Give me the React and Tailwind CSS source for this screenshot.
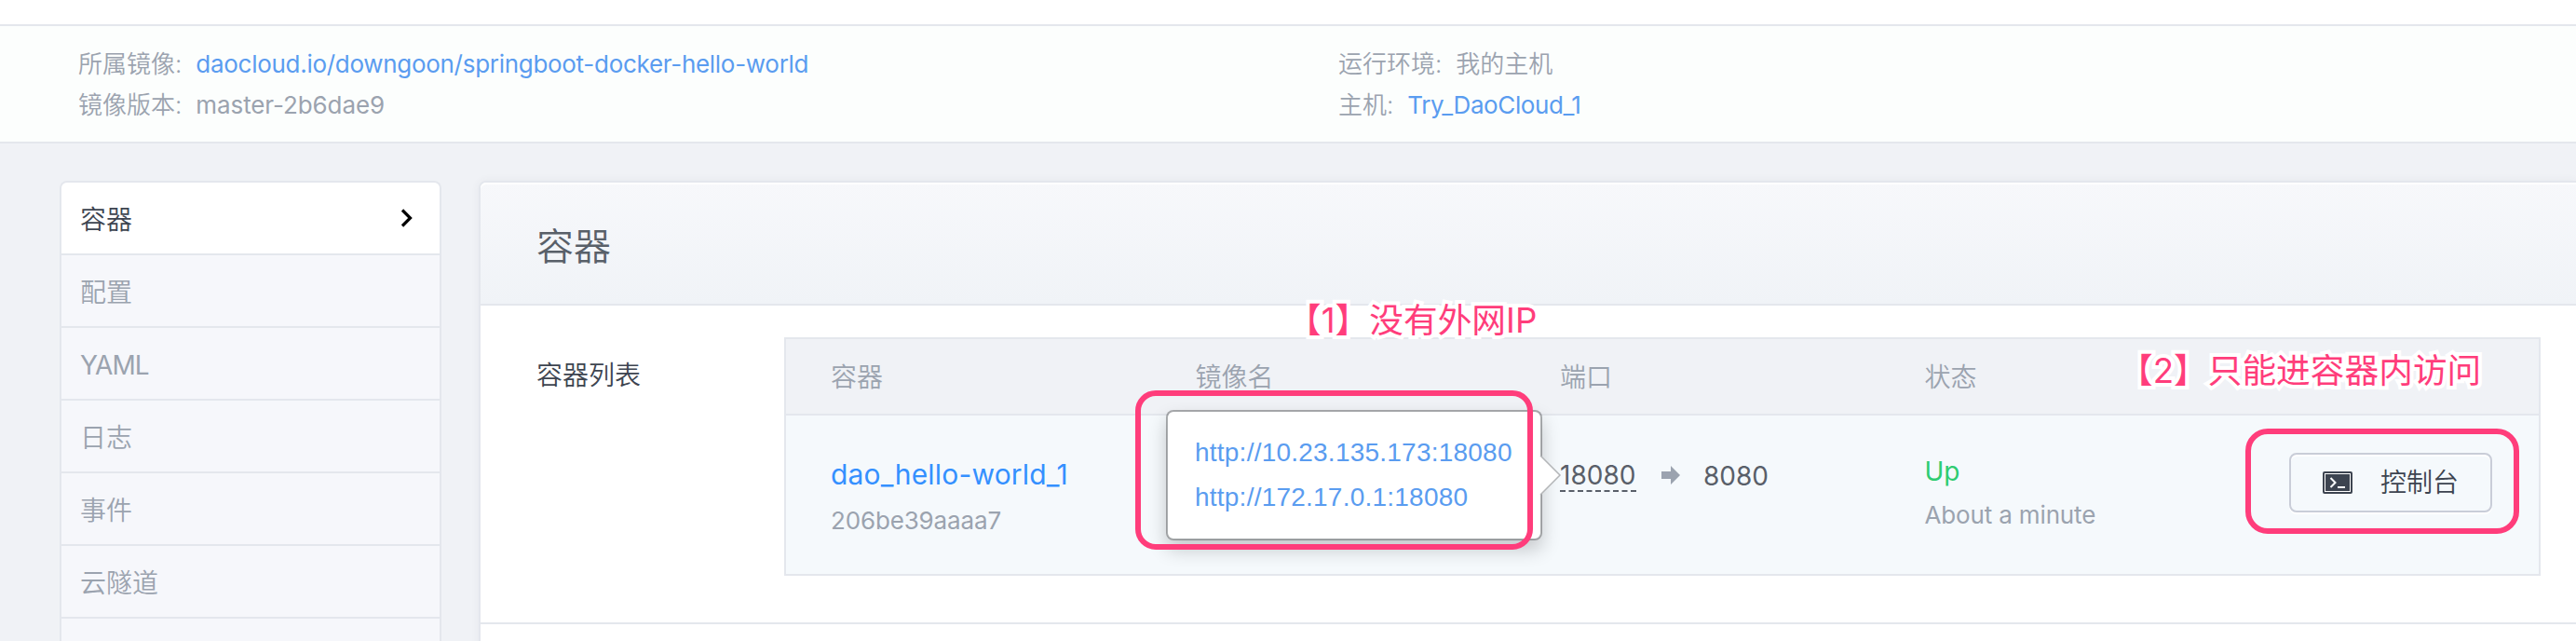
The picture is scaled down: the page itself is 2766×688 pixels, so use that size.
const columns = ["容器", "镜像名", "端口", "状态", ""];
const menu = ["容器", "配置", "YAML", "日志", "事件", "云隧道", ""];

function Annotation({ className, children }) {
  return (
    <div
      className={`absolute z-30 whitespace-pre leading-[44px] text-[36.7px] font-normal text-[#ff3d7b] [-webkit-text-stroke:8px_white] [paint-order:stroke_fill] [stroke-linejoin:round] ${className}`}
    >
      {children}
    </div>
  );
}

function InfoRow({ label, children }) {
  return (
    <div className="flex gap-[15px]">
      <span>{label}:</span>
      {children}
    </div>
  );
}

export default function App() {
  return (
    <div className="relative flex h-[688px] w-[2766px] flex-col overflow-hidden bg-[#f0f2f6] font-['Inter','Noto_Sans_CJK_SC',sans-serif] text-[28px] font-[350] text-[#9ba3af]">
      <div className="h-[28px] shrink-0 border-b-2 border-[#e4e7ed] bg-white" />
      <div className="flex h-[126px] shrink-0 border-b-2 border-[#e4e7ed] bg-[#fcfefd] pl-[84px] pt-[19px] text-[26px] leading-[44px]">
        <div className="w-[1353px]">
          <InfoRow label="所属镜像">
            <a className="font-normal tracking-[-0.29px] text-[#5a9cf0]">daocloud.io/downgoon/springboot-docker-hello-world</a>
          </InfoRow>
          <InfoRow label="镜像版本">
            <span className="font-normal tracking-[-0.1px]">master-2b6dae9</span>
          </InfoRow>
        </div>
        <div>
          <InfoRow label="运行环境">
            <span>我的主机</span>
          </InfoRow>
          <InfoRow label="主机">
            <a className="font-normal tracking-[-0.4px] text-[#5a9cf0]">Try_DaoCloud_1</a>
          </InfoRow>
        </div>
      </div>

      <div className="flex flex-1 items-start pl-[64px] pt-[40px]">
        <nav className="mr-[40px] w-[410px] shrink-0 overflow-hidden rounded-t-[8px] border-x-2 border-t-2 border-[#e4e7ed]">
          {menu.map((item, i) => (
            <div
              key={i}
              className={`flex h-[78px] items-center justify-between border-b-2 border-[#e4e7ed] pl-[20px] pr-[28px] ${i === 0 ? "bg-white text-[#3d4450]" : "bg-[#f6f7fb]"}`}
            >
              <span className={item === "YAML" ? "pt-[4px] font-normal tracking-[-0.9px]" : "pt-[4px]"}>{item}</span>
              {i === 0 && (
                <svg className="h-[20px] w-[14px]" viewBox="0 0 14 20" fill="none" stroke="#000" strokeWidth="3.2">
                  <path d="M2 1.5 L10.5 10 L2 18.5" />
                </svg>
              )}
            </div>
          ))}
        </nav>

        <main className="h-[600px] flex-1 rounded-tl-[8px] border-l-2 border-t-2 border-[#e4e7ed] bg-white shadow-[0_0_10px_rgba(60,70,90,0.06)]">
          <header className="flex h-[132px] items-center rounded-tl-[6px] border-b-2 border-[#e4e7ed] bg-linear-to-b from-[#f7f8fb] to-[#f0f3f7] pl-[60px] pt-[8px] text-[40px] text-[#596069] shadow-[inset_0_2px_0_#fff]">
            容器
          </header>
          <section className="flex h-[342px] border-b-2 border-[#e4e7ed] pl-[60px] pt-[34px]">
            <h3 className="w-[266px] pt-[19px] text-[28px] font-[350] leading-[44px] text-[#3d4450]">容器列表</h3>
            <div className="h-[256px] w-[1886px] border-2 border-[#e4e7ed]">
              <div className="flex h-[82px] items-center border-b-2 border-[#e4e7ed] bg-[#f0f2f6]">
                {columns.map((c, i) => (
                  <div key={i} className="w-[391.5px] shrink-0 pl-[48px] pt-[2px] last:w-[312px]">{c}</div>
                ))}
              </div>
              <div className="flex h-[170px] bg-[#f5f9fc] font-normal">
                <div className="w-[391.5px] shrink-0 pl-[48px] pt-[41px]">
                  <div className="text-[30px] leading-[44px] tracking-[0.2px] text-[#3490ff]">dao_hello-world_1</div>
                  <div className="pt-[6px] text-[26px] leading-[44px] tracking-[-0.15px]">206be39aaaa7</div>
                </div>
                <div className="w-[391.5px] shrink-0" />
                <div className="flex w-[391.5px] shrink-0 items-start pl-[48px] pt-[44px] leading-[40px] text-[#595f69]">
                  <span className="h-[38px] w-[82px] border-b-2 border-dashed border-[#595f69]">18080</span>
                  <svg className="ml-[27px] mt-[10px] h-[20px] w-[20px]" viewBox="0 0 20 20" fill="#9ba3af">
                    <path d="M0 6h10V0l10 10-10 10v-6H0z" />
                  </svg>
                  <span className="ml-[25px] pt-px">8080</span>
                </div>
                <div className="w-[391.5px] shrink-0 pl-[48px] pt-[40px]">
                  <div className="leading-[40px] text-[#2ecc71]">Up</div>
                  <div className="pt-[7px] text-[26px] leading-[40px] tracking-[-0.15px]">About a minute</div>
                </div>
                <div className="pl-[48px] pt-[40px]">
                  <button className="flex h-[64px] w-[218px] items-center rounded-[8px] border-2 border-[#c9cdd8] pl-[34px] font-[350] text-[#3d4450] shadow-[0_2px_0_#fff,inset_0_2px_0_#fff]">
                    <svg className="mr-[30px] h-[24px] w-[32px]" viewBox="0 0 32 24" fill="none">
                      <rect width="32" height="24" rx="2" fill="#3d4450" />
                      <rect x="2.5" y="2.5" width="27" height="19" stroke="#fff" />
                      <path d="M8.5 7l5 5-5 5" stroke="#fff" strokeWidth="2" />
                      <path d="M16 17h8" stroke="#fff" strokeWidth="2" />
                    </svg>
                    控制台
                  </button>
                </div>
              </div>
            </div>
          </section>
        </main>
      </div>

      <div className="absolute left-[1252px] top-[440px] z-10 h-[140px] w-[404px] rounded-[8px] border-2 border-black/30 bg-white bg-clip-padding pl-[29px] pt-[20px] font-['Liberation_Sans',sans-serif] font-normal leading-[48px] tracking-[0.23px] text-[#5a9cf0] shadow-[0_10px_20px_rgba(0,0,0,0.2)]">
        <div>http://10.23.135.173:18080</div>
        <div>http://172.17.0.1:18080</div>
        <svg className="absolute left-[399px] top-[44px] h-[48px] w-[24px]" viewBox="0 0 24 48">
          <path d="M0 2L22 24L0 46z" fill="#fff" />
          <path d="M1 3L22 24L1 45" fill="none" stroke="#b4b6b8" strokeWidth="1.5" />
        </svg>
      </div>

      <div className="absolute left-[1219px] top-[419px] z-20 h-[171px] w-[427px] rounded-[22px] border-[6px] border-[#ff3d7b]" />
      <div className="absolute left-[2411px] top-[460px] z-20 h-[113px] w-[294px] rounded-[24px] border-[6px] border-[#ff3d7b]" />
      <Annotation className="left-[1382px] top-[322px]">【1】没有外网IP</Annotation>
      <Annotation className="left-[2275px] top-[376px]">【2】只能进容器内访问</Annotation>
    </div>
  );
}
